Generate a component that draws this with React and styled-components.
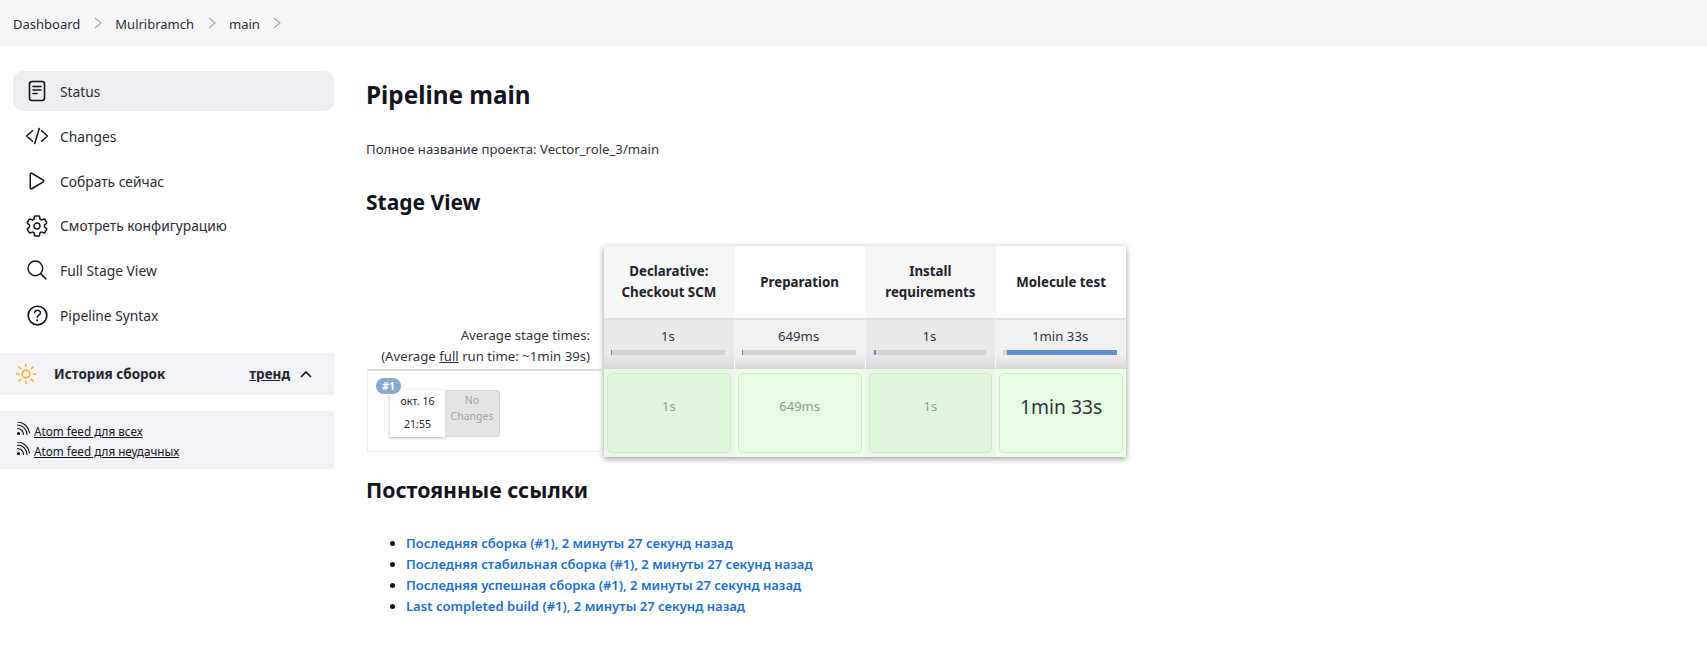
import React from 'react';
import styled, { createGlobalStyle, css } from 'styled-components';
import {
  IoCodeSlashOutline,
  IoPlayOutline,
  IoSettingsOutline,
  IoSearchOutline,
  IoHelpCircleOutline,
  IoSunnyOutline,
} from 'react-icons/io5';

const GlobalStyle = createGlobalStyle`
  html, body {
    margin: 0;
    padding: 0;
    background: #fff;
  }
  body {
    font-family: "Noto Sans", "Open Sans", sans-serif;
    color: #14141f;
    font-size: 13px;
  }
  a {
    color: inherit;
  }
`;

const Page = styled.div`
  width: 1707px;
  height: 669px;
  overflow: hidden;
`;

const Breadcrumbs = styled.nav`
  display: flex;
  align-items: center;
  height: 46px;
  padding: 2px 0 0 13px;
  box-sizing: border-box;
  background: #f6f6f8;
`;

const Crumb = styled.span`
  font-size: 13px;
  color: #2b2b38;
`;

const CrumbArrow = styled.svg`
  width: 10px;
  height: 14px;
  margin: 0 12.5px 2px 12.5px;
  fill: none;
  stroke: #a5a5b0;
  stroke-width: 1.1;
`;

const Body = styled.div`
  display: flex;
`;

const Sidebar = styled.aside`
  width: 334px;
  flex: none;
  padding: 25px 0 0 0;
  box-sizing: border-box;
`;

const Tasks = styled.div`
  display: flex;
  flex-direction: column;
  padding-left: 13px;
`;

const Task = styled.a`
  display: flex;
  align-items: center;
  height: ${p => (p.$active ? '40px' : '44.7px')};
  margin-bottom: ${p => (p.$active ? '3px' : '0')};
  padding-left: 12px;
  border-radius: 10px;
  background: ${p => (p.$active ? '#ededf2' : 'transparent')};
  font-size: 13.8px;
  color: #2b2b38;
`;

const iconBox = css`
  width: 24px;
  height: 24px;
  flex: none;
  margin-right: 11px;
  color: #14141f;
`;

const StatusIcon = styled.svg`
  ${iconBox}
  fill: none;
  stroke: #14141f;
  stroke-width: 1.6;
  stroke-linecap: round;
  stroke-linejoin: round;
`;

const CodeIcon = styled(IoCodeSlashOutline)`${iconBox}`;
const PlayIcon = styled(IoPlayOutline)`${iconBox}`;
const GearIcon = styled(IoSettingsOutline)`${iconBox}`;
const SearchIcon = styled(IoSearchOutline)`${iconBox}`;

const HelpIcon = styled(IoHelpCircleOutline)`
  ${iconBox}
  width: 27px;
  height: 27px;
  margin: 0 9.5px 0 -1.5px;
`;

const SunIcon = styled(IoSunnyOutline)`
  width: 24px;
  height: 24px;
  margin-left: -1px;
  flex: none;
  color: #f7b032;
`;

const HistoryHeader = styled.div`
  display: flex;
  align-items: center;
  height: 42px;
  margin-top: 15.5px;
  padding: 0 21px 0 15px;
  background: #f2f2f7;
`;

const HistoryTitle = styled.strong`
  flex: 1;
  margin-left: 16px;
  font-size: 13.5px;
  font-weight: 700;
  color: #24242f;
`;

const Trend = styled.a`
  font-size: 13.5px;
  font-weight: 700;
  text-decoration: underline;
  color: #24242f;
`;

const Chevron = styled.svg`
  width: 14px;
  height: 10px;
  margin-left: 9px;
  fill: none;
  stroke: #14141f;
  stroke-width: 1.6;
`;

const Feeds = styled.div`
  margin-top: 16px;
  padding: 10px 0 8px 16px;
  background: #f2f2f7;
`;

const FeedRow = styled.div`
  display: flex;
  align-items: center;
  height: 20px;
  font-size: 11.7px;
`;

const FeedIcon = styled.svg`
  width: 14px;
  height: 14px;
  margin: -3px 4px 0 0;
  fill: none;
  stroke: #14141f;
  stroke-width: 1.1;
  stroke-linecap: round;
`;

const Main = styled.main`
  flex: 1;
  padding: 32px 0 0 32px;
`;

const Title = styled.h1`
  margin: 0;
  font-size: 24.3px;
  line-height: 34px;
  font-weight: 700;
  color: #14141f;
`;

const FullName = styled.p`
  margin: 27px 0 0;
  font-size: 13.2px;
  line-height: 20px;
  color: #33333f;
`;

const Subtitle = styled.h2`
  margin: ${p => p.$top} 0 0;
  font-size: ${p => p.$size};
  line-height: 28px;
  font-weight: 700;
  color: #14141f;
`;

const StageView = styled.div`
  display: flex;
  align-items: stretch;
  margin-top: 30px;
  margin-left: 1px;
`;

const Legend = styled.div`
  width: 237px;
  display: flex;
  flex-direction: column;
  justify-content: flex-end;
  flex: none;
`;

const AverageText = styled.div`
  height: 51px;
  box-sizing: border-box;
  padding: 7px 14px 0 0;
  text-align: right;
  font-size: 13.2px;
  line-height: 21px;
  color: #33333f;
`;

const BuildCell = styled.div`
  position: relative;
  height: 83px;
  margin-bottom: 5px;
  box-sizing: border-box;
  border: 1px solid #eeeeee;
  border-top: 2px solid #dddddd;
  border-right: none;
  padding: 19px 0 0 22px;
  display: flex;
  align-items: flex-start;
`;

const BuildBadge = styled.span`
  position: absolute;
  left: 8px;
  top: 7px;
  width: 25px;
  height: 16px;
  border-radius: 8px;
  background: #85a9cf;
  color: #fff;
  font-size: 10.5px;
  font-weight: 700;
  line-height: 16px;
  text-align: center;
`;

const BuildDate = styled.div`
  width: 55px;
  height: 47px;
  box-sizing: border-box;
  background: #fff;
  box-shadow: 0 1px 3px rgba(0, 0, 0, 0.3);
  text-align: center;
  font-size: 10.5px;
  line-height: 23px;
  color: #22222c;
`;

const NoChanges = styled.div`
  width: 55px;
  height: 47px;
  box-sizing: border-box;
  padding-top: 1px;
  border-radius: 0 4px 4px 0;
  border: 1px solid #d6d6d6;
  border-left: none;
  background: #e3e3e3;
  text-align: center;
  font-size: 10.5px;
  line-height: 16px;
  color: #a3a3a3;
`;

const StageTable = styled.div`
  display: flex;
  width: 522px;
  height: 211px;
  flex: none;
  box-shadow: 0 2px 6px rgba(0, 0, 0, 0.4);
`;

const Column = styled.div`
  flex: 1;
  display: flex;
  flex-direction: column;
  border-right: ${p => (p.$last ? 'none' : '1px solid #f4f4f4')};
  background: ${p => (p.$odd ? '#eaf7e7' : '#eefbea')};
`;

const StageName = styled.div`
  height: 72px;
  flex: none;
  display: flex;
  align-items: center;
  justify-content: center;
  padding: 0 10px;
  box-sizing: border-box;
  text-align: center;
  font-size: 13.3px;
  line-height: 21px;
  font-weight: 700;
  color: #22222c;
  background: ${p => (p.$odd ? '#f7f7f7' : '#ffffff')};
`;

const StageAverage = styled.div`
  height: 51px;
  flex: none;
  box-sizing: border-box;
  padding: 6px 9px 0 7px;
  border-top: 2px solid #e0e0e0;
  text-align: center;
  font-size: 13.2px;
  line-height: 20px;
  color: #33333f;
  background: linear-gradient(
    to bottom,
    ${p => (p.$odd ? '#e9e9e9' : '#f1f1f1')} 70%,
    #d8d8d8 100%
  );
`;

const ProgressBar = styled.div`
  height: 5px;
  margin-top: 3.5px;
  background: #d3d3d3;
  display: flex;
`;

const ProgressFill = styled.div`
  height: 5px;
  background: #5f8dd3;
`;

const StageCell = styled.div`
  flex: 1;
  margin: 4px 3px;
  display: flex;
  align-items: center;
  justify-content: center;
  box-sizing: border-box;
  padding-bottom: 14px;
  border: 1px solid #d3e6cf;
  border-radius: 5px;
  background: ${p => (p.$odd ? '#dff7dc' : '#e5fde1')};
  font-size: ${p => (p.$big ? '19.3px' : '13px')};
  color: ${p => (p.$big ? '#33333f' : '#8f9c8d')};
`;

const LinkList = styled.ul`
  margin: 29px 0 0;
  padding-left: 40px;
`;

const LinkItem = styled.li`
  font-size: 13.05px;
  line-height: 21px;
  font-weight: 600;
  color: #14141f;
`;

const PermaLink = styled.a`
  color: #1a6fd9;
  text-decoration: none;
`;

const stages = [
  { name: ['Declarative:', 'Checkout SCM'], time: '1s', offset: 0, fill: 0.6 },
  { name: ['Preparation'], time: '649ms', offset: 0.4, fill: 1 },
  { name: ['Install', 'requirements'], time: '1s', offset: 1.2, fill: 1.6 },
  { name: ['Molecule test'], time: '1min 33s', offset: 3.5, fill: 96.5, big: true },
];

const links = [
  'Последняя сборка (#1), 2 минуты 27 секунд назад',
  'Последняя стабильная сборка (#1), 2 минуты 27 секунд назад',
  'Последняя успешная сборка (#1), 2 минуты 27 секунд назад',
  'Last completed build (#1), 2 минуты 27 секунд назад',
];

const Arrow = () => (
  <CrumbArrow viewBox="0 0 10 14">
    <path d="M2 2l6 5-6 5" />
  </CrumbArrow>
);

const tasks = [
  {
    label: 'Status',
    active: true,
    icon: (
      <StatusIcon viewBox="0 0 24 24">
        <rect x="4.5" y="2.5" width="15" height="19" rx="2.5" />
        <path d="M8 7.5h8M8 11h8M8 14.5h4" />
      </StatusIcon>
    ),
  },
  { label: 'Changes', icon: <CodeIcon /> },
  { label: 'Собрать сейчас', icon: <PlayIcon /> },
  { label: 'Смотреть конфигурацию', icon: <GearIcon /> },
  { label: 'Full Stage View', icon: <SearchIcon /> },
  { label: 'Pipeline Syntax', icon: <HelpIcon /> },
];

const FeedGlyph = () => (
  <FeedIcon viewBox="0 0 14 14">
    <circle cx="2.5" cy="11.5" r="1" fill="#14141f" />
    <path d="M1.5 6.5a6 6 0 0 1 6 6M1.5 3a9.5 9.5 0 0 1 9.5 9.5M1.5 0a12.5 12.5 0 0 1 12 11" />
  </FeedIcon>
);

const App = () => (
  <Page>
    <GlobalStyle />
    <Breadcrumbs>
      <Crumb>Dashboard</Crumb>
      <Arrow />
      <Crumb>Mulribramch</Crumb>
      <Arrow />
      <Crumb>main</Crumb>
      <Arrow />
    </Breadcrumbs>
    <Body>
      <Sidebar>
        <Tasks>
          {tasks.map(task => (
            <Task key={task.label} $active={task.active}>
              {task.icon}
              {task.label}
            </Task>
          ))}
        </Tasks>
        <HistoryHeader>
          <SunIcon />
          <HistoryTitle>История сборок</HistoryTitle>
          <Trend href="#">тренд</Trend>
          <Chevron viewBox="0 0 14 10">
            <path d="M2 8l5-5 5 5" />
          </Chevron>
        </HistoryHeader>
        <Feeds>
          <FeedRow>
            <FeedGlyph />
            <a href="#">Atom feed для всех</a>
          </FeedRow>
          <FeedRow>
            <FeedGlyph />
            <a href="#">Atom feed для неудачных</a>
          </FeedRow>
        </Feeds>
      </Sidebar>
      <Main>
        <Title>Pipeline main</Title>
        <FullName>Полное название проекта: Vector_role_3/main</FullName>
        <Subtitle $top="29px" $size="21px">Stage View</Subtitle>
        <StageView>
          <Legend>
            <AverageText>
              Average stage times:
              <br />
              (Average <u>full</u> run time: ~1min 39s)
            </AverageText>
            <BuildCell>
              <BuildBadge>#1</BuildBadge>
              <BuildDate>
                окт. 16
                <br />
                21:55
              </BuildDate>
              <NoChanges>
                No
                <br />
                Changes
              </NoChanges>
            </BuildCell>
          </Legend>
          <StageTable>
            {stages.map((stage, i) => (
              <Column key={stage.name[0]} $odd={i % 2 === 0} $last={i === 3}>
                <StageName $odd={i % 2 === 0}>
                  <div>
                    {stage.name.map(line => (
                      <div key={line}>{line}</div>
                    ))}
                  </div>
                </StageName>
                <StageAverage $odd={i % 2 === 0}>
                  {stage.time}
                  <ProgressBar>
                    <ProgressFill style={{ marginLeft: `${stage.offset}%`, width: `${stage.fill}%` }} />
                  </ProgressBar>
                </StageAverage>
                <StageCell $odd={i % 2 === 0} $big={stage.big}>
                  {stage.time}
                </StageCell>
              </Column>
            ))}
          </StageTable>
        </StageView>
        <Subtitle $top="19px" $size="21.3px">Постоянные ссылки</Subtitle>
        <LinkList>
          {links.map(link => (
            <LinkItem key={link}>
              <PermaLink href="#">{link}</PermaLink>
            </LinkItem>
          ))}
        </LinkList>
      </Main>
    </Body>
  </Page>
);

export default App;
